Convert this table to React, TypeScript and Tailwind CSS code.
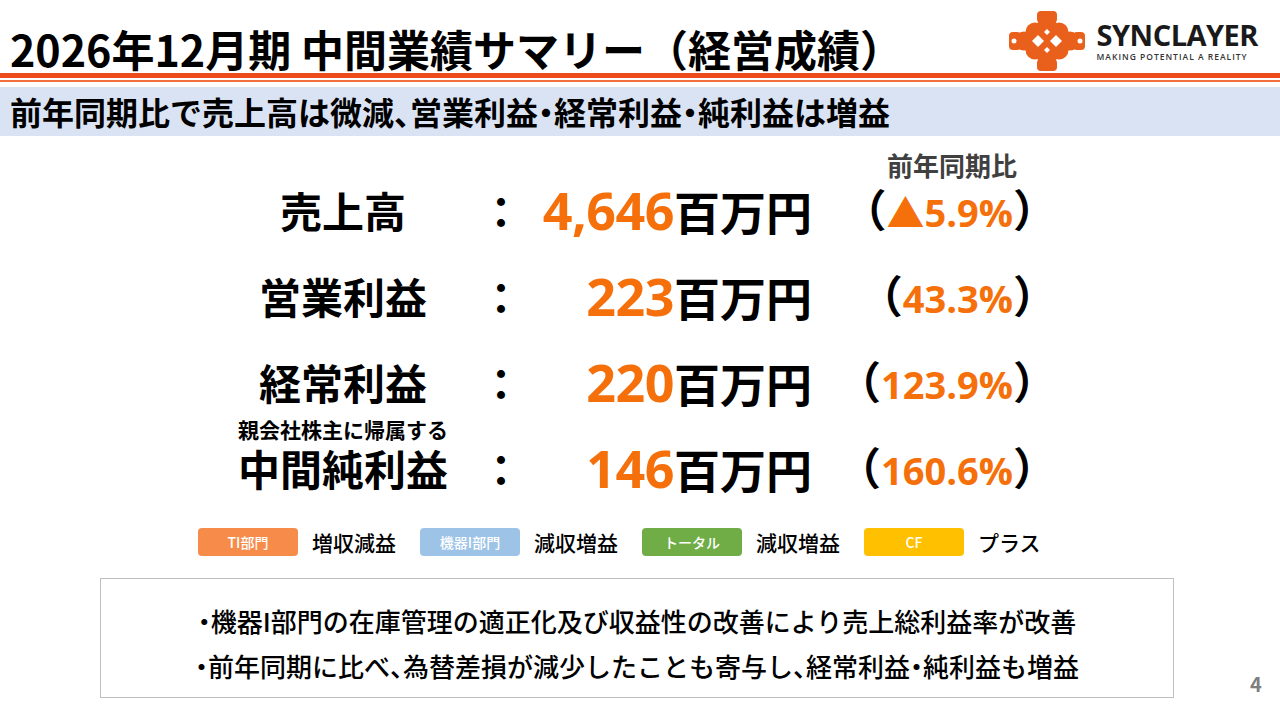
import React from "react";

const jp = "font-['Noto_Sans_CJK_JP',sans-serif]";
const num = "font-['Open_Sans','Noto_Sans_CJK_JP',sans-serif]";

type Result = {
  label: string;
  sub?: string;
  value: string;
  pct: string;
};

const results: Result[] = [
  { label: "売上高", value: "4,646", pct: "▲5.9%" },
  { label: "営業利益", value: "223", pct: "43.3%" },
  { label: "経常利益", value: "220", pct: "123.9%" },
  { label: "中間純利益", sub: "親会社株主に帰属する", value: "146", pct: "160.6%" },
];

const legend = [
  { tag: "TI部門", color: "bg-[#f68b4a]", text: "増収減益" },
  { tag: "機器I部門", color: "bg-[#9dc3e6]", text: "減収増益" },
  { tag: "トータル", color: "bg-[#70ad47]", text: "減収増益" },
  { tag: "CF", color: "bg-[#ffc000]", text: "プラス" },
];

function Logo() {
  return (
    <svg width="78" height="62" viewBox="0 0 78 62">
      <g fill="#e8601c">
        <rect x="29" y="1" width="20" height="12" rx="4" />
        <rect x="29" y="49" width="20" height="12" rx="4" />
        <rect x="1" y="22" width="12" height="18" rx="4" />
        <rect x="65" y="22" width="12" height="18" rx="4" />
        <circle cx="39" cy="14" r="9.5" />
        <circle cx="27" cy="22" r="9.5" />
        <circle cx="51" cy="22" r="9.5" />
        <circle cx="16" cy="31" r="9.5" />
        <circle cx="62" cy="31" r="9.5" />
        <circle cx="27" cy="40" r="9.5" />
        <circle cx="51" cy="40" r="9.5" />
        <circle cx="39" cy="48" r="9.5" />
        <circle cx="39" cy="31" r="11" />
      </g>
      <g fill="#ffffff">
        <polygon points="30,25 36,31 30,37 24,31" />
        <polygon points="48,25 54,31 48,37 42,31" />
        <polygon points="39,19 42,22 39,25 36,22" />
        <polygon points="39,37 42,40 39,43 36,40" />
        <circle cx="6" cy="31" r="2.5" />
        <circle cx="72" cy="31" r="2.5" />
      </g>
    </svg>
  );
}

function ResultRow({ r }: { r: Result }) {
  return (
    <div className="flex h-[86px] items-center">
      <div className="ml-[220px] flex w-[246px] flex-col items-center">
        {r.sub && (
          <div className="-mt-[25px] mb-[3px] h-[22px] text-[21px] font-bold leading-[22px]">{r.sub}</div>
        )}
        <div className="h-[50px] text-[42px] font-bold leading-[50px]">{r.label}</div>
      </div>
      <div className="w-[70px] text-center text-[42px] font-bold leading-[50px]">：</div>
      <div className="flex w-[276px] items-baseline justify-end">
        <span className={`${num} text-[52px] font-bold leading-[60px] tracking-[-0.5px] text-[#f5700a]`}>
          {r.value}
        </span>
        <span className="text-[46px] font-bold leading-[60px]">百万円</span>
      </div>
      <div className="flex w-[223px] items-baseline justify-end [font-feature-settings:'halt']">
        <span className="text-[44px] font-bold leading-[56px]">（</span>
        <span className={`${num} text-[38px] font-bold leading-[56px] text-[#f5700a]`}>
          {r.pct}
        </span>
        <span className="text-[44px] font-bold leading-[56px]">）</span>
      </div>
    </div>
  );
}

export default function App() {
  return (
    <main className={`${jp} relative h-[720px] w-[1280px] overflow-hidden bg-white text-black`}>
      <header className="flex h-[73px] justify-between">
        <h1 className="pl-[10px] pt-[23px] text-[43px] font-bold leading-[50px]">
          2026年12月期 中間業績サマリー（経営成績）
        </h1>
        <div className="flex items-center gap-[11px] self-start pr-[22px] pt-[10px]">
          <Logo />
          <div className="flex flex-col">
            <div className={`${num} text-[29px] font-bold leading-[28px] tracking-[-0.5px] text-[#1a1a1a]`}>
              SYNCLAYER
            </div>
            <div className={`${num} mt-[3px] text-[8.5px] font-semibold leading-[10px] tracking-[1px] text-[#333]`}>
              MAKING POTENTIAL A REALITY
            </div>
          </div>
        </div>
      </header>
      <div className="h-[5px] bg-[#ee4b1c]" />
      <div className="mt-[2px] h-[2px] bg-[#f27040]" />
      <div className="mt-[5px] h-[49px] bg-[#dae3f3] pl-[10px] text-[32px] font-bold leading-[49px] [font-feature-settings:'halt']">
        前年同期比で売上高は微減、営業利益・経常利益・純利益は増益
      </div>

      <div className="mt-[14px] h-[30px] pl-[887px] text-[26px] font-bold leading-[30px] text-[#404040]">
        前年同期比
      </div>
      <div className="-mt-[13px]">
        {results.map((r) => (
          <ResultRow key={r.label} r={r} />
        ))}
      </div>

      <div className="mt-[17px] ml-[198px] flex gap-[22px]">
        {legend.map((l) => (
          <div key={l.tag} className="flex items-center gap-[14px]">
            <div
              className={`${l.color} flex h-[28px] w-[100px] items-center justify-center rounded-[4px] text-[14px] font-medium text-white`}
            >
              {l.tag}
            </div>
            <div className="w-[86px] text-[21px] font-medium leading-[28px]">{l.text}</div>
          </div>
        ))}
      </div>

      <div className="mt-[22px] flex items-end">
        <div className="ml-[100px] h-[120px] w-[1074px] border-[1.5px] border-[#bfbfbf] pt-[19px] text-center text-[26px] font-medium leading-[45px] [font-feature-settings:'halt']">
          <p>・機器I部門の在庫管理の適正化及び収益性の改善により売上総利益率が改善</p>
          <p>・前年同期に比べ、為替差損が減少したことも寄与し、経常利益・純利益も増益</p>
        </div>
        <div className="ml-[76px] pb-[2px] text-[20px] font-bold leading-[24px] text-[#7f7f7f]">4</div>
      </div>
    </main>
  );
}
